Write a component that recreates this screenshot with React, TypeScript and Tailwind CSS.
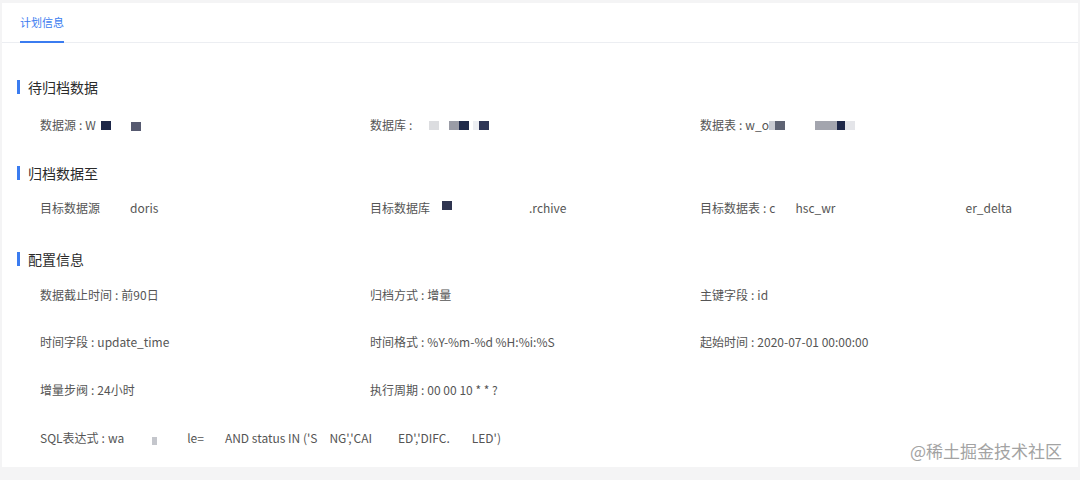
import React from 'react';

const font = { fontFamily: '"Noto Sans CJK SC", "Noto Sans", sans-serif' };

const Sq = ({ c, w = 10, h = 9, y = 0 }: { c: string; w?: number; h?: number; y?: number }) => (
  <span className="inline-block align-middle" style={{ background: c, width: w, height: h, marginTop: y }} />
);

const Gap = ({ w }: { w: number }) => <span className="inline-block" style={{ width: w }} />;

// colon sits centred with space on both sides in the original font
const Colon = () => <span className="mx-[3px]">:</span>;

const Label = ({ k, v }: { k: string; v: React.ReactNode }) => (
  <>
    {k}
    <Colon />
    {v}
  </>
);

const Heading = ({ children, className = '' }: { children: React.ReactNode; className?: string }) => (
  <div className={`flex items-center h-5 pl-[15px] ${className}`}>
    <span className="w-[3px] h-[14px] bg-[#3b7cf0] mr-[8px]" />
    <span className="text-[14px] text-[#2b2b2b] leading-5">{children}</span>
  </div>
);

const Row = ({ cells, className = '' }: { cells: React.ReactNode[]; className?: string }) => (
  <div className={`grid grid-cols-[330px_330px_1fr] pl-[38px] h-5 items-center text-[12px] text-[#555] leading-5 ${className}`}>
    {cells.map((c, i) => (
      <div key={i} className="flex items-center whitespace-nowrap">{c}</div>
    ))}
  </div>
);

export default function App() {
  return (
    <div className="w-[1080px] h-[480px] bg-[#f4f4f5] pt-[3px] pl-[2px] overflow-hidden relative" style={font}>
      <div className="bg-white h-[464px] w-[1076px]">
        <div className="h-[40px] border-b border-[#eceef2] pl-[18px] flex">
          <div className="h-full flex items-center relative text-[11px] text-[#3b7cf0]">
            计划信息
            <span className="absolute left-0 right-0 bottom-[-1px] h-[2px] bg-[#3b7cf0]" />
          </div>
        </div>

        <Heading className="mt-[34px]">待归档数据</Heading>
        <Row
          className="mt-[18px]"
          cells={[
            <Label k="数据源" v={<>W<Gap w={5} /><Sq c="#1d2748" /><Gap w={20} /><Sq c="#565a70" y={2} /></>} />,
            <Label k="数据库" v={<><Gap w={14} /><Sq c="#dcdde0" /><Gap w={10} /><Sq c="#9a9ca6" /><Sq c="#1f2a4a" /><Gap w={4} /><Sq c="#eceef2" w={6} /><Sq c="#2d3556" /></>} />,
            <Label k="数据表" v={<>w_o<Sq c="#c9cbd2" w={6} /><Sq c="#5e6373" w={10} /><Gap w={30} /><Sq c="#a3a5ae" w={22} /><Sq c="#1d2748" w={8} /><Sq c="#e4e5e9" w={10} /></>} />,
          ]}
        />

        <Heading className="mt-[28px]">归档数据至</Heading>
        <Row
          className="mt-[15px]"
          cells={[
            <>目标数据源<Gap w={30} />doris</>,
            <>目标数据库<Gap w={12} /><Sq c="#2f3550" y={-6} /><Gap w={77} />.rchive</>,
            <Label k="目标数据表" v={<>c<Gap w={20} />hsc_wr<Gap w={130} />er_delta</>} />,
          ]}
        />

        <Heading className="mt-[31px]">配置信息</Heading>
        <Row
          className="mt-[16px]"
          cells={[
            <Label k="数据截止时间" v="前90日" />,
            <Label k="归档方式" v="增量" />,
            <Label k="主键字段" v="id" />,
          ]}
        />
        <Row
          className="mt-[27px]"
          cells={[
            <Label k="时间字段" v="update_time" />,
            <Label k="时间格式" v="%Y-%m-%d %H:%i:%S" />,
            <Label k="起始时间" v="2020-07-01 00:00:00" />,
          ]}
        />
        <Row
          className="mt-[28px]"
          cells={[
            <Label k="增量步阀" v="24小时" />,
            <Label k="执行周期" v="00 00 10 * * ?" />,
            '',
          ]}
        />
        <div className="pl-[38px] mt-[28px] h-5 flex items-center whitespace-nowrap text-[12px] text-[#555] leading-5">
          <Label
            k="SQL表达式"
            v={<>wa<Gap w={28} /><Sq c="#c4c6cc" w={5} h={8} y={6} /><Gap w={30} />le=<Gap w={21} />AND status IN ('S<Gap w={12} />NG','CAI<Gap w={26} />ED','DIFC.<Gap w={22} />LED')</>}
          />
        </div>
      </div>
      <div className="absolute right-[18px] top-[441px] text-[17px] text-[#a3a3a3] leading-5">@稀土掘金技术社区</div>
    </div>
  );
}
